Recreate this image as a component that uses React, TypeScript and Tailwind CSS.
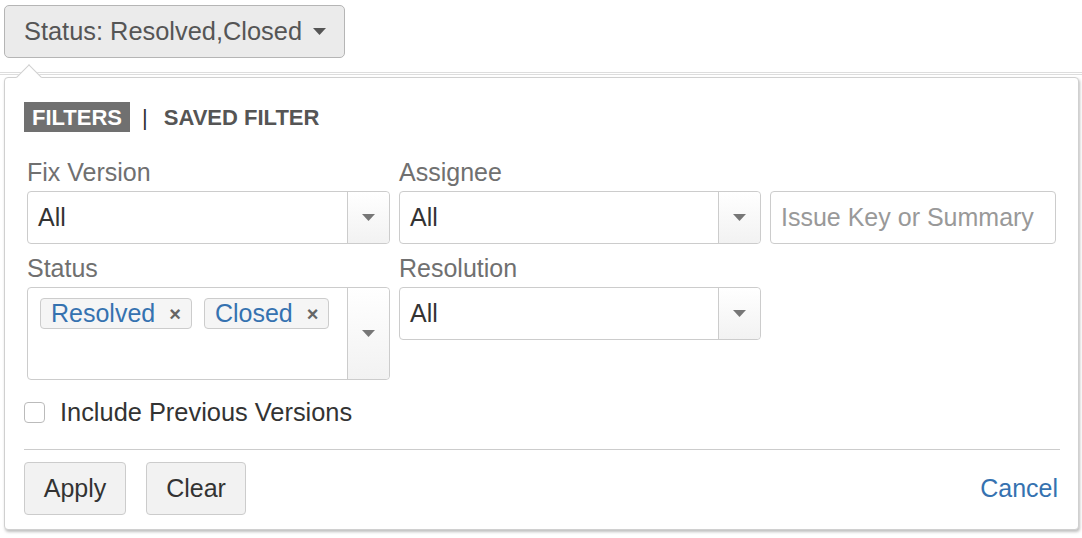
import React from 'react';

const Caret = ({ color = '#707070' }: { color?: string }) => (
  <svg width="13" height="7" viewBox="0 0 13 7" className="shrink-0">
    <polygon points="0,0 13,0 6.5,7" fill={color} />
  </svg>
);

function SelectBox({ value, tall }: { value?: string; tall?: boolean }) {
  return (
    <div
      className={`flex rounded-[4px] border border-[#cccccc] bg-white ${tall ? 'h-[93px]' : 'h-[53px]'}`}
    >
      <div className="flex flex-1 items-center pl-[10px] text-[25px] text-[#333333]">
        {value}
      </div>
      <div className="flex w-[42px] items-center justify-center rounded-r-[4px] border-l border-[#cccccc] bg-gradient-to-b from-white to-[#f2f2f2]">
        <Caret color="#777777" />
      </div>
    </div>
  );
}

function Tag({ label }: { label: string }) {
  return (
    <span className="flex h-[31px] items-center gap-[14px] rounded-[4px] border border-[#cccccc] bg-[#f5f5f5] pl-[10px] pr-[10px] text-[25px] text-[#3572b0]">
      {label}
      <span className="text-[20px] font-bold text-[#666666]">×</span>
    </span>
  );
}

export default function App() {
  return (
    <div className="h-[538px] w-[1082px] overflow-hidden bg-white font-['Liberation_Sans',Arial,sans-serif]">
      {/* trigger */}
      <div className="pl-[4px] pt-[5px]">
        <button className="flex h-[53px] w-[341px] items-center gap-[11px] rounded-[5px] border border-[#b5b5b5] bg-[#ebebeb] pl-[19px] text-[25.4px] text-[#555555]">
          Status: Resolved,Closed
          <Caret color="#555555" />
        </button>
      </div>

      <div className="mt-[14px] h-[3px] border-y border-[#dddddd]" />

      {/* filter panel */}
      <div className="relative ml-[4px] mt-[2px] w-[1075px] rounded-[4px] border border-[#d0d0d0] bg-white pb-[14px] pl-[19px] pr-[18px] pt-[24px] shadow-[1px_2px_3px_rgba(0,0,0,0.25)]">
        <div className="absolute left-[15px] top-[-10px] h-[18px] w-[18px] rotate-45 border-l border-t border-[#d0d0d0] bg-white" />

        <div className="relative flex h-[30px] items-center text-[22px] font-bold">
          <span className="flex h-[30px] items-center bg-[#707070] px-[8px] text-white">FILTERS</span>
          <span className="ml-[12px] text-[22px] font-normal text-[#333333]">|</span>
          <span className="ml-[16px] text-[#555555]">SAVED FILTER</span>
        </div>

        <div className="mt-[26px] grid grid-cols-[363px_362px_286px] gap-x-[9px] pl-[3px]">
          <div className="mb-[5px] h-[28px] text-[25px] leading-[28px] text-[#707070]">Fix Version</div>
          <div className="mb-[5px] h-[28px] text-[25px] leading-[28px] text-[#707070]">Assignee</div>
          <div />

          <SelectBox value="All" />
          <SelectBox value="All" />
          <div className="flex h-[53px] items-center rounded-[4px] border border-[#cccccc] bg-white pl-[10px] text-[25px] text-[#999999]">
            Issue Key or Summary
          </div>

          <div className="mb-[5px] mt-[10px] h-[28px] text-[25px] leading-[28px] text-[#707070]">Status</div>
          <div className="mb-[5px] mt-[10px] h-[28px] text-[25px] leading-[28px] text-[#707070]">Resolution</div>
          <div />

          <div className="flex h-[93px] rounded-[4px] border border-[#cccccc] bg-white">
            <div className="flex flex-1 items-start gap-[12px] pl-[12px] pt-[10px]">
              <Tag label="Resolved" />
              <Tag label="Closed" />
            </div>
            <div className="flex w-[42px] items-center justify-center rounded-r-[4px] border-l border-[#cccccc] bg-gradient-to-b from-white to-[#f2f2f2]">
              <Caret color="#777777" />
            </div>
          </div>
          <div className="self-start">
            <SelectBox value="All" />
          </div>
          <div />
        </div>

        <label className="mt-[22px] flex h-[21px] items-center gap-[15px] text-[25.4px] text-[#333333]">
          <span className="h-[21px] w-[21px] rounded-[4px] border border-[#bbbbbb] bg-white" />
          Include Previous Versions
        </label>

        <div className="mt-[26px] border-t border-[#cccccc]" />

        <div className="mt-[12px] flex items-center">
          <button className="h-[53px] w-[102px] rounded-[4px] border border-[#cccccc] bg-[#f2f2f2] text-[25px] text-[#333333]">
            Apply
          </button>
          <button className="ml-[20px] h-[53px] w-[100px] rounded-[4px] border border-[#cccccc] bg-[#f2f2f2] text-[25px] text-[#333333]">
            Clear
          </button>
          <span className="ml-auto pr-[2px] text-[25px] text-[#3572b0]">Cancel</span>
        </div>
      </div>
    </div>
  );
}
